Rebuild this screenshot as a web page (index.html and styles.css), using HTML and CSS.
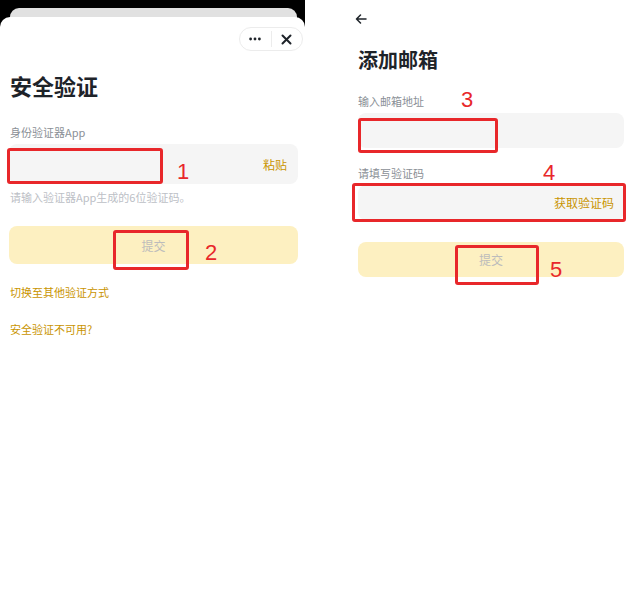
FILE: index.html
```html
<!DOCTYPE html>
<html lang="zh-CN">
<head>
    <meta charset="UTF-8">
    <meta name="viewport" content="width=device-width, initial-scale=1.0">
    <title>安全验证</title>
    <link rel="stylesheet" href="styles.css">
</head>
<body>
    <div class="page">
        <!-- Left: security check sheet -->
        <div class="phone">
            <div class="phone-top">
                <div class="peek"></div>
            </div>
            <div class="sheet">
                <div class="sheet-bar">
                    <div class="capsule">
                        <span class="capsule-btn">
                            <svg width="12" height="4" viewBox="0 0 12 4"><circle cx="1.6" cy="2" r="1.4"/><circle cx="6" cy="2" r="1.4"/><circle cx="10.4" cy="2" r="1.4"/></svg>
                        </span>
                        <span class="capsule-line"></span>
                        <span class="capsule-btn">
                            <svg width="11" height="11" viewBox="0 0 11 11"><path d="M1.5 1.5 L9.5 9.5 M9.5 1.5 L1.5 9.5" /></svg>
                        </span>
                    </div>
                </div>

                <h1 class="title">安全验证</h1>
                <div class="label">身份验证器App</div>
                <div class="field">
                    <span class="field-action">粘贴</span>
                </div>
                <div class="hint">请输入验证器App生成的6位验证码。</div>
                <div class="btn-submit">提交</div>
                <div class="link link-first">切换至其他验证方式</div>
                <div class="link">安全验证不可用?</div>
            </div>
        </div>

        <!-- Right: add email -->
        <div class="panel">
            <div class="back">
                <svg width="12" height="10" viewBox="0 0 12 10"><path d="M11 5 H1.5 M5.5 1 L1.5 5 L5.5 9" /></svg>
            </div>
            <h2 class="panel-title">添加邮箱</h2>
            <div class="label label-first">输入邮箱地址</div>
            <div class="field field-sm"></div>
            <div class="label label-code">请填写验证码</div>
            <div class="field field-sm">
                <span class="field-action field-action-lg">获取验证码</span>
            </div>
            <div class="btn-submit btn-submit-sm">提交</div>
        </div>

        <!-- Red annotations drawn over the screens -->
        <div class="mark mark-1"></div>
        <div class="num num-1">1</div>
        <div class="mark mark-2"></div>
        <div class="num num-2">2</div>
        <div class="mark mark-3"></div>
        <div class="num num-3">3</div>
        <div class="mark mark-4"></div>
        <div class="num num-4">4</div>
        <div class="mark mark-5"></div>
        <div class="num num-5">5</div>
    </div>
</body>
</html>
```

FILE: styles.css
```css
body {
    margin: 0;
    padding: 0;
    background-color: #fff;
    font-family: "Noto Sans CJK SC", "Noto Sans", sans-serif;
    color: #1e2329;
}

.page {
    position: relative;
    width: 634px;
    height: 604px;
    display: flex;
    overflow: hidden;
}

/* Left phone screen */
.phone {
    width: 305px;
    height: 604px;
    background-color: #000;
    display: flex;
    flex-direction: column;
}

.phone-top {
    padding-top: 8px;
}

.peek {
    height: 10px;
    margin: 0 8px 0 10px;
    background-color: #e1e1e1;
    border-radius: 9px 9px 0 0;
}

.sheet {
    flex: 1;
    margin-top: -1px;
    background-color: #fff;
    border-radius: 10px 10px 0 0;
    padding: 0 7px 0 9px;
}

.sheet-bar {
    display: flex;
    justify-content: flex-end;
    margin-top: 10px;
    margin-right: -5px;
}

.capsule {
    width: 62px;
    height: 22px;
    border: 1px solid #ececec;
    border-radius: 12px;
    display: flex;
    align-items: center;
}

.capsule-btn {
    flex: 1;
    display: flex;
    justify-content: center;
    align-items: center;
}

.capsule-btn svg {
    fill: #1e2329;
    stroke: #1e2329;
    stroke-width: 2;
    stroke-linecap: round;
}

.capsule-btn circle {
    stroke: none;
}

.capsule-line {
    width: 1px;
    height: 16px;
    background-color: #ececec;
}

.title {
    margin: 19px 0 0 1px;
    font-size: 22px;
    line-height: 30px;
    font-weight: 700;
}

.label {
    margin: 24px 0 0 1px;
    font-size: 11px;
    line-height: 16px;
    color: #8a8f96;
}

.field {
    margin-top: 4px;
    height: 40px;
    background-color: #f5f5f5;
    border-radius: 8px;
    display: flex;
    align-items: center;
    justify-content: flex-end;
    padding: 0 11px;
}

.field-action {
    font-size: 12px;
    color: #c99400;
}

.hint {
    margin: 5px 0 0 1px;
    font-size: 11px;
    line-height: 16px;
    color: #bcc0c6;
}

.btn-submit {
    margin-top: 21px;
    height: 38px;
    background-color: #fdf0c1;
    border-radius: 8px;
    display: flex;
    align-items: center;
    justify-content: center;
    font-size: 12px;
    color: #bcbcbc;
}

.link {
    margin: 21px 0 0 1px;
    font-size: 11px;
    line-height: 16px;
    color: #c99400;
}

.link-first {
    margin-top: 20px;
}

/* Right screen */
.panel {
    flex: 1;
    padding: 0 10px 0 53px;
}

.back {
    margin: 14px 0 0 -3px;
    height: 10px;
}

.back svg {
    display: block;
    fill: none;
    stroke: #1e2329;
    stroke-width: 1.5;
    stroke-linecap: round;
    stroke-linejoin: round;
}

.panel-title {
    margin: 22px 0 0;
    font-size: 20px;
    line-height: 28px;
    font-weight: 700;
}

.label-first {
    margin-top: 19px;
    margin-left: 0;
}

.label-code {
    margin-top: 17px;
    margin-left: 0;
}

.field-sm {
    height: 35px;
    margin-top: 4px;
    padding: 0 10px;
}

.field-action-lg {
    font-size: 12px;
}

.btn-submit-sm {
    margin-top: 22px;
    height: 35px;
}

/* Annotation overlays */
.mark {
    position: absolute;
    border: 3px solid #e8272a;
    border-radius: 3px;
    box-sizing: border-box;
}

.mark-1 { left: 7px; top: 148px; width: 156px; height: 36px; }
.mark-2 { left: 113px; top: 230px; width: 76px; height: 40px; }
.mark-3 { left: 358px; top: 118px; width: 140px; height: 35px; }
.mark-4 { left: 352px; top: 183px; width: 274px; height: 39px; }
.mark-5 { left: 455px; top: 245px; width: 84px; height: 40px; }

.num {
    position: absolute;
    font-family: "Liberation Sans", sans-serif;
    font-size: 22px;
    line-height: 22px;
    color: #e8272a;
}

.num-1 { left: 177px; top: 161px; }
.num-2 { left: 205px; top: 242px; }
.num-3 { left: 461px; top: 89px; }
.num-4 { left: 543px; top: 162px; }
.num-5 { left: 550px; top: 259px; }
```
